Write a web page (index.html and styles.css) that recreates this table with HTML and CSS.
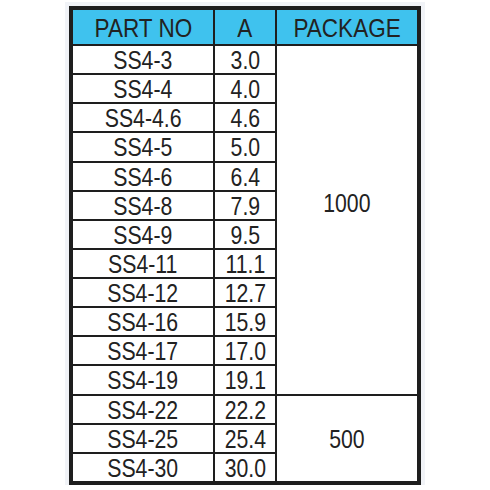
FILE: index.html
```html
<!DOCTYPE html>
<html>
<head>
<meta charset="utf-8">
<link rel="stylesheet" href="styles.css">
</head>
<body>
<div class="frame">
  <div class="table">
    <div class="cell head"><span class="t">PART NO</span></div>
    <div class="cell head"><span class="t">A</span></div>
    <div class="cell head"><span class="t">PACKAGE</span></div>

    <div class="cell"><span class="t">SS4-3</span></div><div class="cell"><span class="t">3.0</span></div>
    <div class="cell pkg pkg-big"><span class="t">1000</span></div>
    <div class="cell"><span class="t">SS4-4</span></div><div class="cell"><span class="t">4.0</span></div>
    <div class="cell"><span class="t">SS4-4.6</span></div><div class="cell"><span class="t">4.6</span></div>
    <div class="cell"><span class="t">SS4-5</span></div><div class="cell"><span class="t">5.0</span></div>
    <div class="cell"><span class="t">SS4-6</span></div><div class="cell"><span class="t">6.4</span></div>
    <div class="cell"><span class="t">SS4-8</span></div><div class="cell"><span class="t">7.9</span></div>
    <div class="cell"><span class="t">SS4-9</span></div><div class="cell"><span class="t">9.5</span></div>
    <div class="cell"><span class="t">SS4-11</span></div><div class="cell"><span class="t">11.1</span></div>
    <div class="cell"><span class="t">SS4-12</span></div><div class="cell"><span class="t">12.7</span></div>
    <div class="cell"><span class="t">SS4-16</span></div><div class="cell"><span class="t">15.9</span></div>
    <div class="cell"><span class="t">SS4-17</span></div><div class="cell"><span class="t">17.0</span></div>
    <div class="cell"><span class="t">SS4-19</span></div><div class="cell"><span class="t">19.1</span></div>

    <div class="cell"><span class="t">SS4-22</span></div><div class="cell"><span class="t">22.2</span></div>
    <div class="cell pkg pkg-small"><span class="t">500</span></div>
    <div class="cell"><span class="t">SS4-25</span></div><div class="cell"><span class="t">25.4</span></div>
    <div class="cell"><span class="t">SS4-30</span></div><div class="cell"><span class="t">30.0</span></div>
  </div>
</div>
</body>
</html>
```

FILE: styles.css
```css
html, body {
  margin: 0;
  padding: 0;
  background: #ffffff;
}

.frame {
  padding: 6px 0 0 69px;
}

.table {
  display: grid;
  grid-template-columns: 140px 60px 140px;
  grid-template-rows: 34px repeat(15, 27.13px);
  gap: 2px;
  width: 344px;
  background: #1e1e1e;
  border: 4px solid #1e1e1e;
  box-shadow: 0 0 0 4px #f1f3f7;
  font-family: "Liberation Sans", Arial, sans-serif;
  color: #222222;
}

.cell {
  background: #ffffff;
  display: flex;
  align-items: center;
  justify-content: center;
  font-size: 25px;
  line-height: 1;
  padding-top: 2px;
  box-sizing: border-box;
}

.t {
  display: inline-block;
  white-space: nowrap;
  transform: scaleX(0.85);
}

.head {
  background: #3fc2ee;
  font-size: 26.5px;
  padding-top: 2px;
}

.pkg {
  grid-column: 3;
}

.pkg-big {
  grid-row: 2 / span 12;
  padding-bottom: 34px;
}

.pkg-small {
  grid-row: 14 / span 3;
}
```
